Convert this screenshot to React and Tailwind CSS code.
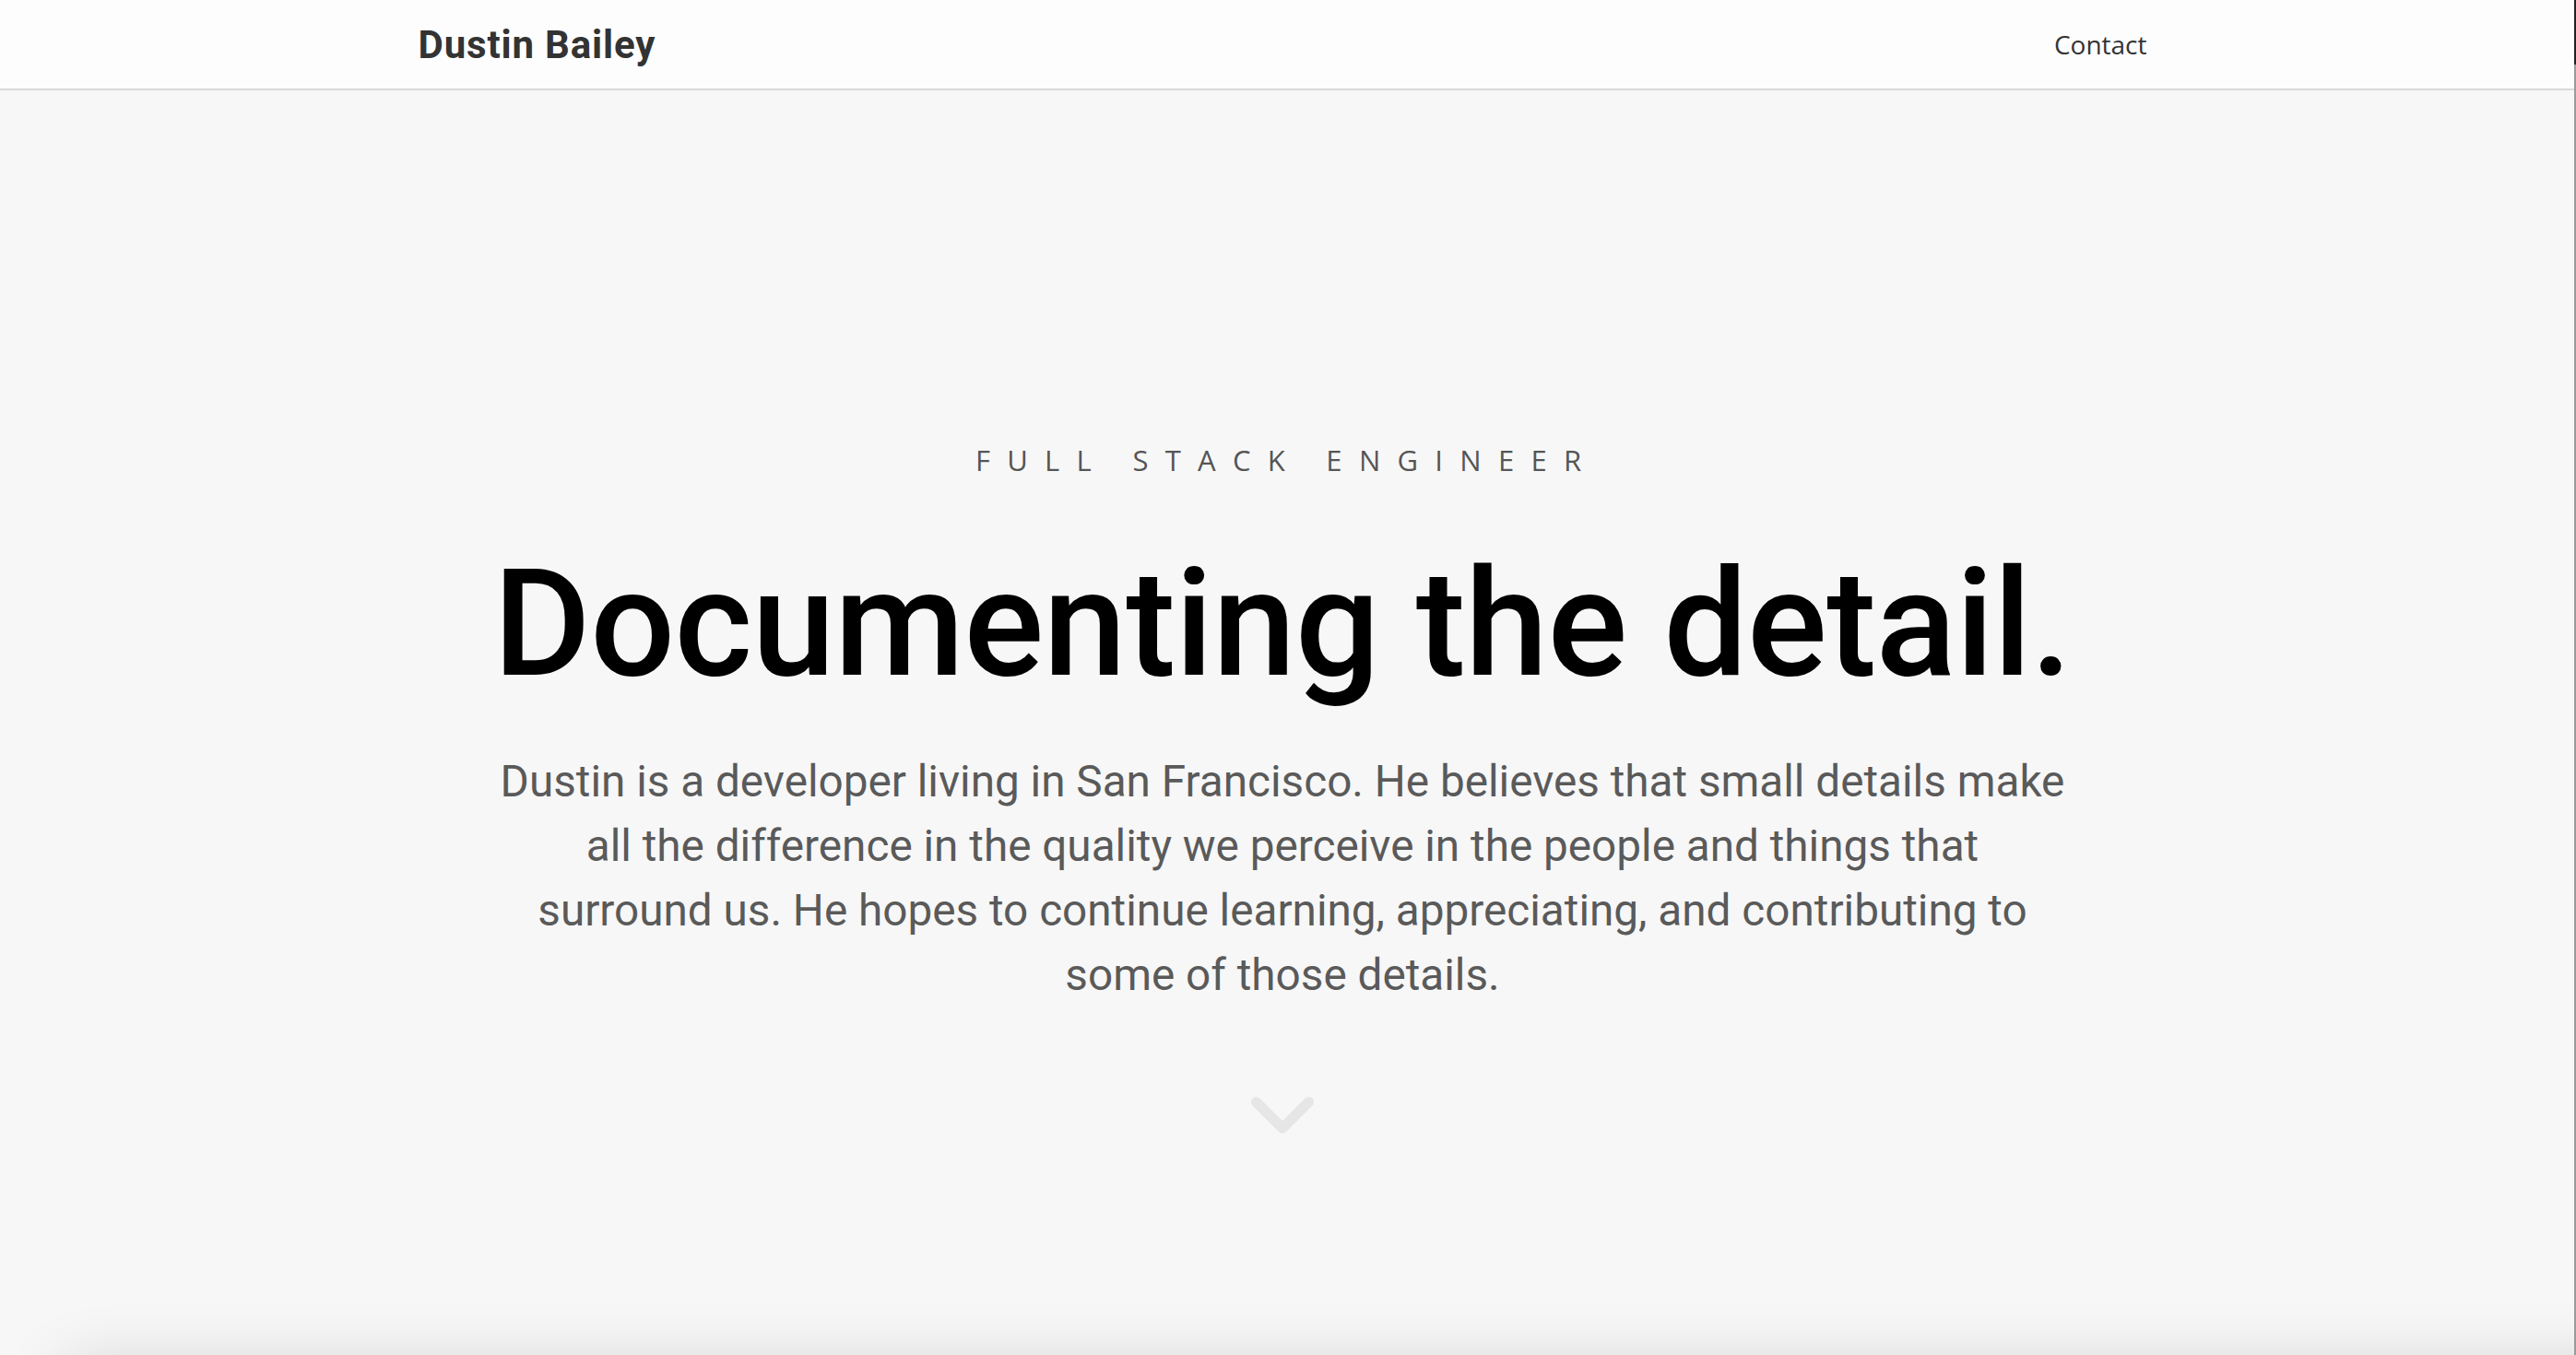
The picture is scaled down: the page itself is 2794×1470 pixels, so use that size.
import React from "react";

const Chevron = () => (
  <svg width="68" height="42" viewBox="0 0 68 42" fill="none">
    <polyline
      points="5.5,5.5 34,34 62.5,5.5"
      stroke="#e6e6e6"
      strokeWidth="11"
      strokeLinecap="round"
      strokeLinejoin="round"
    />
  </svg>
);

const App = () => {
  return (
    <div className="relative h-screen overflow-hidden bg-[#f7f7f7] flex flex-col pr-[12px] font-['Roboto',sans-serif]">
      <header className="h-[98px] shrink-0 border-b-2 border-[#d9d9d9] bg-[#fdfdfd] flex items-center -mr-[12px] pr-[12px]">
        <div className="w-[1875px] mx-auto flex items-center justify-between">
          <a className="text-[42px] font-bold tracking-[0.02em] text-[#333] font-['Roboto',sans-serif]">
            Dustin Bailey
          </a>
          <a className="text-[28px] text-[#333] font-['Open_Sans',sans-serif]">Contact</a>
        </div>
      </header>

      <main className="flex-1 flex flex-col items-center pt-[381px]">
        <p className="text-[31px] leading-[40px] tracking-[0.59em] pl-[0.3em] text-[#555] font-['Open_Sans',sans-serif]">
          FULL STACK ENGINEER
        </p>
        <h1 className="mt-[77px] text-[162px] leading-none tracking-[-0.6px] font-medium text-black">
          Documenting the detail.
        </h1>
        <p className="mt-[55px] text-[47.7px] leading-[70px] text-center text-[#5a5a5a]">
          Dustin is a developer living in San Francisco. He believes that small details make
          <br />
          all the difference in the quality we perceive in the people and things that
          <br />
          surround us. He hopes to continue learning, appreciating, and contributing to
          <br />
          some of those details.
        </p>
        <div className="mt-[97px]">
          <Chevron />
        </div>
      </main>

      <div className="absolute left-[70px] -right-[100px] top-[calc(100%+12px)] h-[200px] bg-white shadow-[0_0_70px_rgba(0,0,0,0.16)]" />

      <div className="fixed top-0 right-0 h-full w-[2px] flex flex-col">
        <div className="h-[70px] bg-[#222]" />
        <div className="flex-1 bg-[#9a9a9a]" />
      </div>
    </div>
  );
};

export default App;
